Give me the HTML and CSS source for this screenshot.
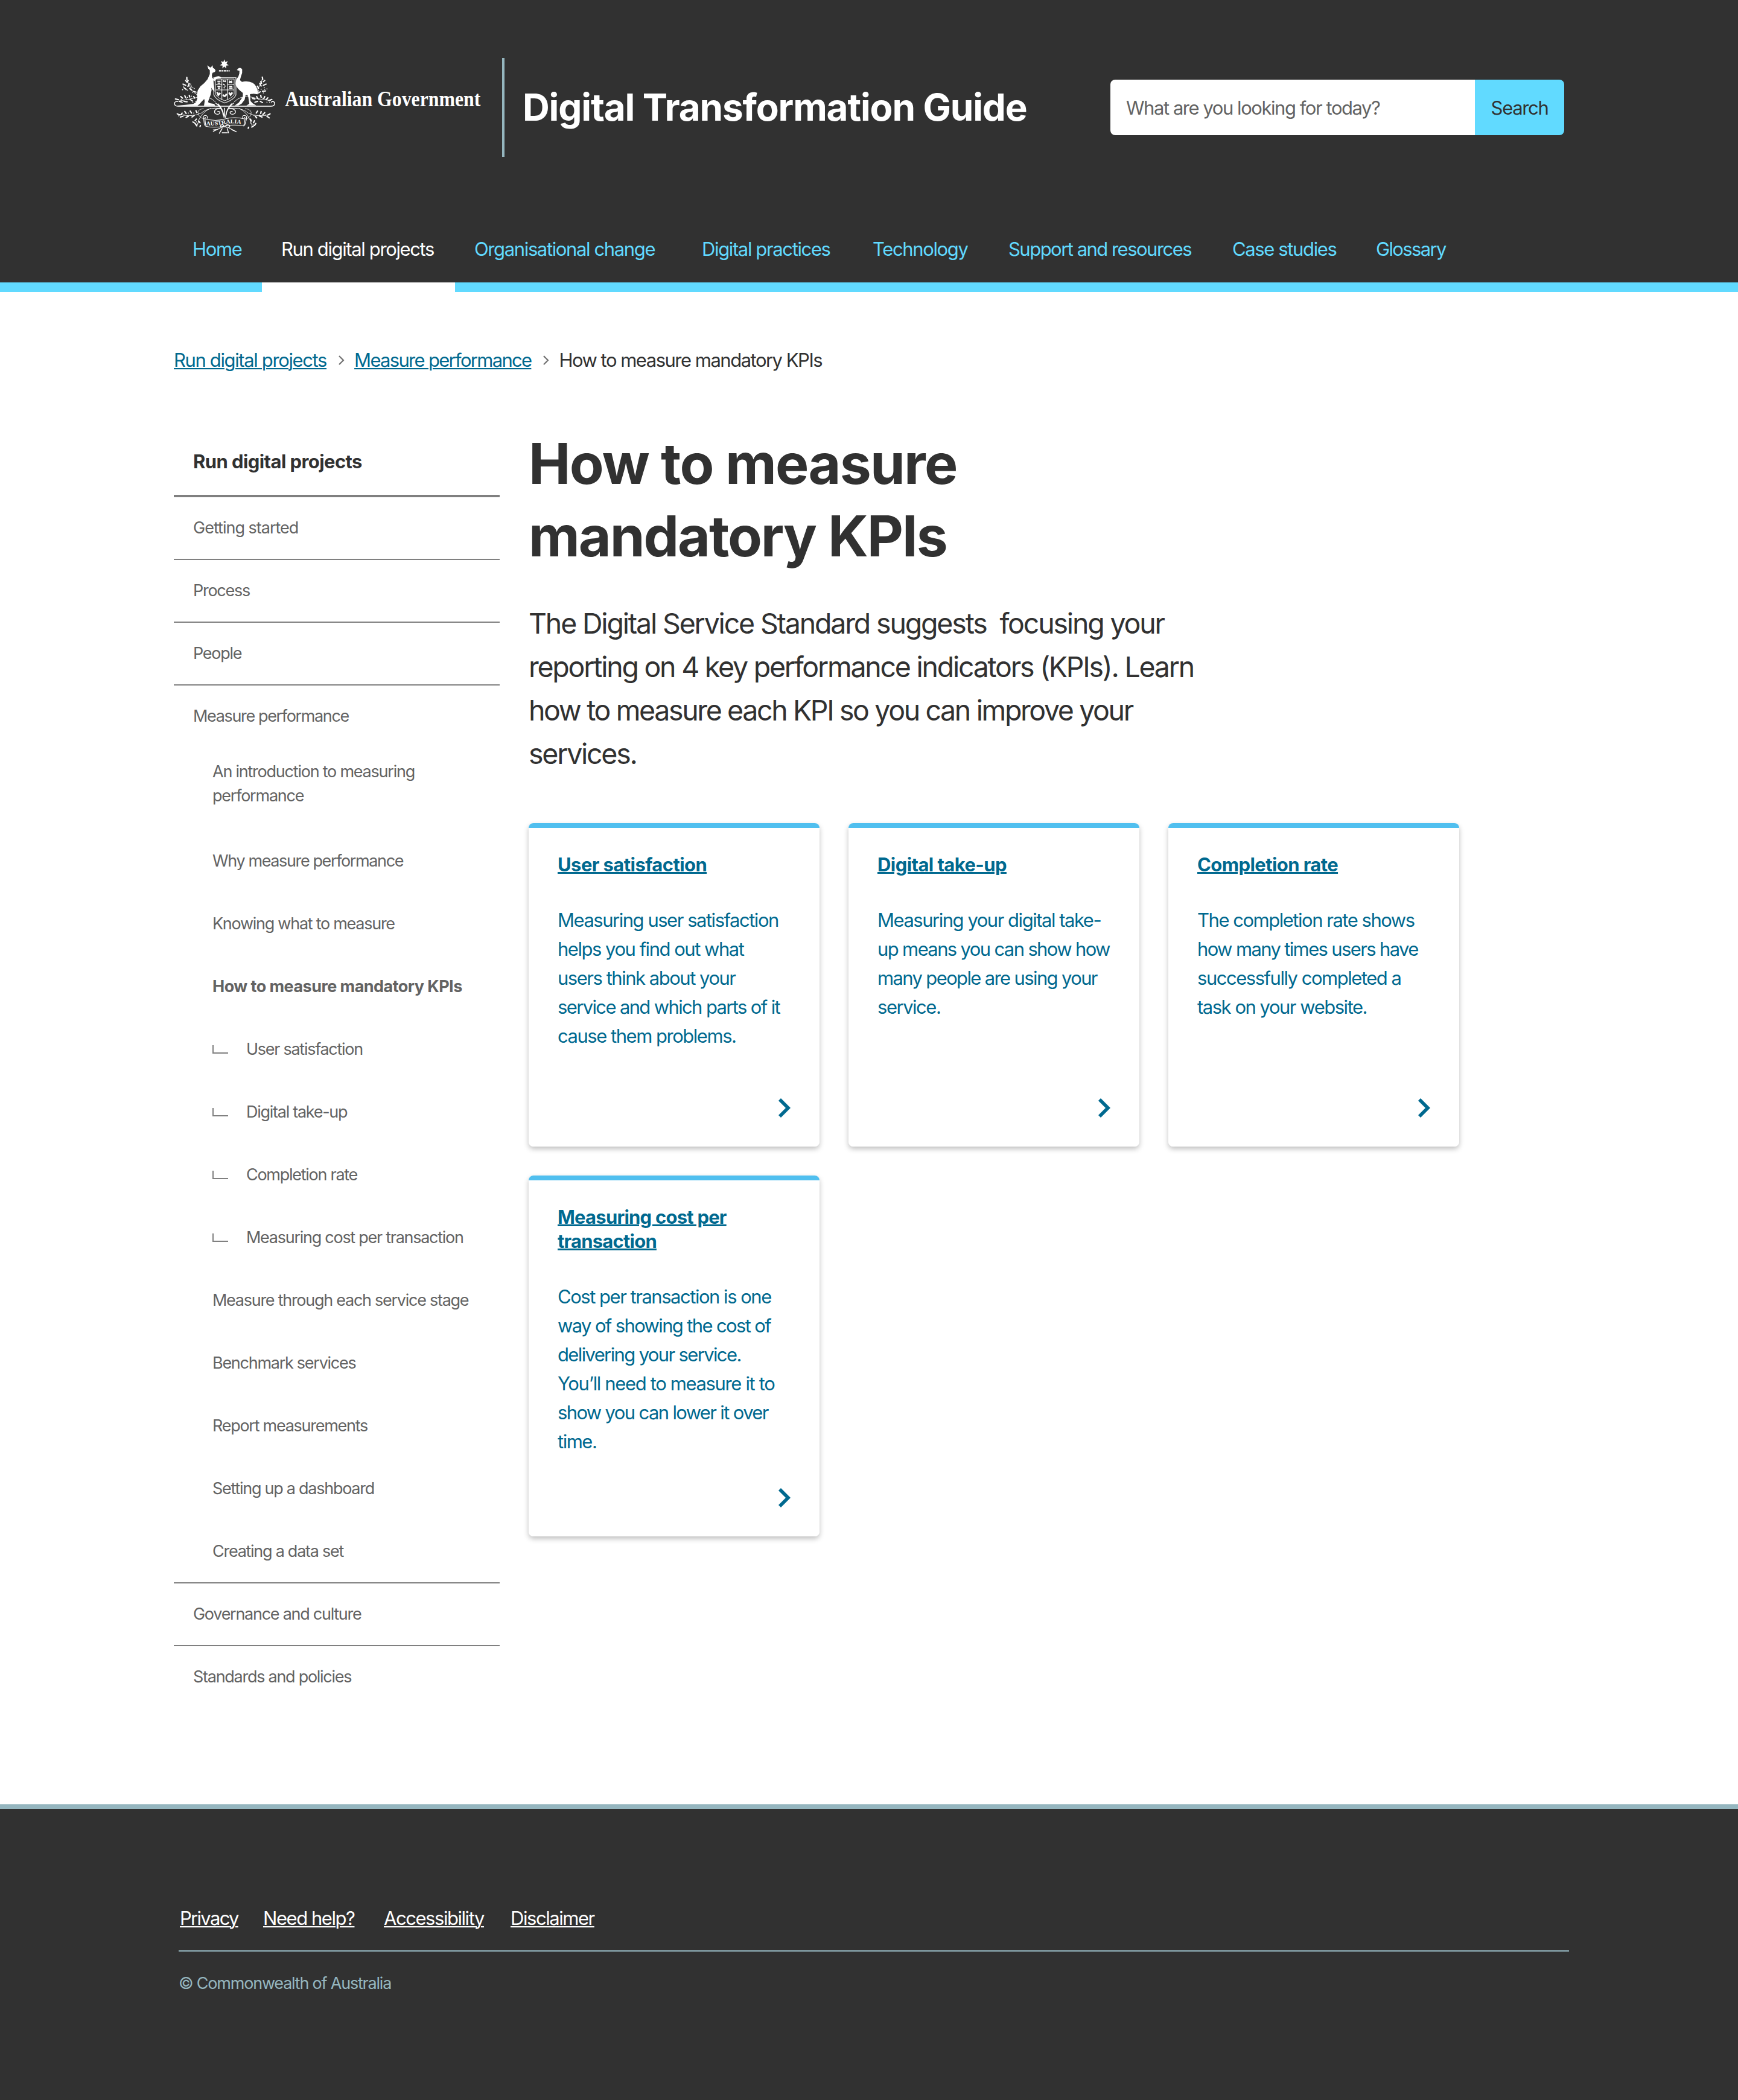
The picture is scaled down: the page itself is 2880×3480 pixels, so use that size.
FILE: index.html
```html
<!DOCTYPE html>
<html lang="en">
<head>
<meta charset="utf-8">
<title>How to measure mandatory KPIs - Digital Transformation Guide</title>
<link rel="stylesheet" href="styles.css">
</head>
<body>
<header class="site-header">
  <div class="wrap brand-row">
    <svg class="logo" viewBox="48.66 48 1449.1 492" preserveAspectRatio="none" role="img" aria-label="Australian Government">
      <!-- Commonwealth star, kangaroo and emu -->
      <g fill="#fff">
        <path d="M275 55L279.3 68.2 290.6 64 284.7 76.3 294.5 84.4 282.8 86.5 283.7 100.6 275 91 266.3 100.6 267.2 86.5 255.5 84.4 265.3 76.3 259.4 64 270.7 68.2z"/>
        <path transform="matrix(1 0 0 .92 0 6.5)" d="M197 85l10 7 5 5 5-4 5-9 2 15 8 6 4 10-4 6-10 5-3 12 2 14 8 10-4 8 1 14 1 12 3 10 1 22-9-12-6-10 2 12-4 26-8 24-4 16 8 6 20 4 4 9h-50l3-24-2-12-10 12-12 16-8 8H62l40-4 34-5 12-10 6-20-2-20 4-24 12-22 17-17 15-21 10-28 0-20-7-9-3-12z"/>
        <path d="M229 148q8-9 22-9l10 5-2 5-12 2-10 3-7 10z"/>
        <path d="M331 108L339 99Q349 95 355 105 357 122 350 138L345 158 354 167Q380 160 402 172 420 184 426 218L424 229 405 226 390 228 392 262 402 274 418 284H374L387 276 382 240 378 232 370 234 366 256 352 276 338 284H322L340 270 358 240V222Q330 200 325 178 325 158 338 140 344 125 343 112L336 110z"/>
      </g>
      <!-- Shield, scrollwork and ribbon -->
      <g fill="none" stroke="#fff">
        <path d="M251 112h48" stroke-width="7" stroke-dasharray="12 2 6 2"/>
        <path d="M228 146h99v86q-8 24-50 40q-41-16-49-40z" stroke-width="4" stroke-opacity=".75"/>
        <path d="M236 153h83v76q-8 18-42 32q-34-14-41-32z" stroke-width="2.5"/>
        <path d="M264 153v103M289 153v103M236 207h83M236 181h28M289 181h30" stroke-width="3"/>
        <path d="M244 164h14M245 173h12M244 190h14M246 198h10M296 162l14 10M310 162l-14 10M297 190h14M296 198h16" stroke-width="6"/>
        <path d="M270 160l4 6M280 160l-2 8M270 178l6 4M280 186l-4 4M272 198l5-3" stroke-width="6"/>
        <path d="M243 218l5 14 9-10M269 230q8 18 16-4M296 220l7 12 8-12" stroke-width="8"/>
        <path d="M68 266q-2-4-8-2-10 4-8 14 4 10 16 10h416q14 0 16-10 2-12-8-14-6 0-6 6" stroke-width="4"/>
        <path d="M276 340V296M270 334q-2-38-34-62M283 334q2-38 34-62M274 345q-4-44-28-70M280 345q4-44 28-70" stroke-width="4"/>
        <path d="M262 302q-22-6-30 8-4 18 14 18 12-2 8-12-6-4-10 0M292 302q22-6 32 8 4 18-14 18-12-2-8-12 6-4 10 0" stroke-width="4"/>
        <path d="M236 268q-28-34-74-26-50 14-90 20M318 268q28-34 74-26 50 14 92 18" stroke-width="2.5"/>
        <path d="M154 232q-32-20-48-84M402 226q36-30 44-78" stroke-width="2.5"/>
        <path d="M258 298q-60-4-86 24-40 22-100 6M296 298q60-4 86 24 40 22 96 8" stroke-width="2.5"/>
        <path d="M214 298q-50 24-60 84M340 298q44 20 60 90" stroke-width="2.5"/>
        <path d="M182 300q-34 4-22 30 4 16 24 20M368 300q34 4 26 30-4 16-22 20" stroke-width="2"/>
        <path d="M188 350q44 16 88 2 44-14 92 0l-6 34q-44-8-84 0-46 12-86 2z" stroke-width="3"/>
        <path d="M198 350q4-16-8-16-12 2-8 12 8 6 8-4M358 350q-4-16 6-16 14 2 10 12-8 6-8-4M182 346l4 38M376 346l-10 38" stroke-width="3"/>
        <path d="M274 388q-4-12-14-6-8 10 4 12M280 388q4-12 16-6 8 10-4 12M264 394q8-8 26 0M258 396l-34 18M296 396l34 20M266 398l-14 26M288 398l6 24M264 420h26M240 404l-16 2M312 408l16 6" stroke-width="4"/>
      </g>
      <!-- Wattle leaves and blossoms -->
      <g stroke="#fff" fill="none" stroke-linecap="round">
        <path d="M107 145v10M102 160l5 8M113 160l-4 8M90 178l12 6M94 196l10 8M118 176l-6 14M120 200l8 8M138 214l10 4" stroke-width="6"/>
        <path d="M445 143l2 12M456 160l-6 6M438 166l4 8M462 178l-12 6M434 174l6 14M424 188l4 12M460 212l-14 2M436 216l-8 6" stroke-width="6"/>
        <path d="M56 252l14 4M74 264l12 4M80 240l8 8M98 236l4 10M118 234l2 8M94 264l14 2M122 254l10 8M138 240l4 8" stroke-width="6"/>
        <path d="M402 250l10 2M420 240l4 10M438 234l2 10M456 240l-4 10M470 246l-6 8M488 254l-14 6M436 264l10 6M412 268l12-4" stroke-width="6"/>
        <path d="M64 326l12 6M86 322l-4 8M98 314l6 10M78 342l12-4M104 344l10-6M122 312l6 10M130 342l10-8M148 310l4 10" stroke-width="6"/>
        <path d="M480 326l-10 6M466 338l10 8M456 320l-6 8M440 314l-2 10M444 342l-12-6M424 312l-6 10M420 346l-6-8" stroke-width="6"/>
        <path d="M150 352l-6 8M144 374l8 12M160 362l6 8M168 384l-2 6M134 366l6 4M392 352l4 10M410 360l-4 10M384 392l-2 6M406 386l-8 6M416 374l-6 10" stroke-width="6"/>
        <path d="M92 188h0M126 186h0M134 196h0M128 192h0M104 206h0M140 200h0M132 218h0M124 178h0M88 206h0M110 208h0M454 196h0M418 210h0M440 204h0M466 202h0M428 212h0M456 204h0M416 190h0M450 222h0M106 252h0M82 254h0M134 268h0M128 238h0M146 264h0M110 244h0M430 254h0M460 256h0M478 268h0M448 248h0M466 268h0M70 336h0M94 332h0M114 322h0M138 322h0M110 336h0M434 332h0M460 332h0M446 328h0M408 334h0M156 376h0M150 366h0M404 378h0M392 372h0" stroke-width="5"/>
      </g>
      <path id="scroll" d="M194 383Q240 384 276 376Q318 368 362 380" fill="none"/>
      <text class="scroll-word"><textPath href="#scroll" textLength="156" lengthAdjust="spacingAndGlyphs">AUSTRALIA</textPath></text>
      <text class="logo-word" x="547" y="289" textLength="876" lengthAdjust="spacingAndGlyphs">Australian Government</text>
    </svg>
    <div class="site-title">Digital Transformation Guide</div>
    <form class="search">
      <input class="search-input" type="text" placeholder="What are you looking for today?">
      <button class="search-button" type="button">Search</button>
    </form>
  </div>
  <nav class="main-nav">
    <ul class="wrap nav-list">
      <li class="nav-item nav-home">Home</li>
      <li class="nav-item nav-active">Run digital projects</li>
      <li class="nav-item">Organisational change</li>
      <li class="nav-item">Digital practices</li>
      <li class="nav-item">Technology</li>
      <li class="nav-item nav-support">Support and resources</li>
      <li class="nav-item">Case studies</li>
      <li class="nav-item nav-glossary">Glossary</li>
    </ul>
  </nav>
</header>

<main class="wrap main">
  <div class="breadcrumb">
    <a class="crumb crumb-first">Run digital projects</a>
    <svg class="crumb-sep" viewBox="0 0 10 16"><path d="M1 1l7 7-7 7"/></svg>
    <a class="crumb crumb-second">Measure performance</a>
    <svg class="crumb-sep" viewBox="0 0 10 16"><path d="M1 1l7 7-7 7"/></svg>
    <span class="crumb-current">How to measure mandatory KPIs</span>
  </div>

  <div class="layout">
    <aside class="side">
      <div class="side-title">Run digital projects</div>
      <div class="side-item side-started">Getting started</div>
      <div class="side-item">Process</div>
      <div class="side-item">People</div>
      <div class="side-group">
        <div class="side-parent">Measure performance</div>
        <div class="sub sub-intro">An introduction to measuring<br>performance</div>
        <div class="sub sub-why">Why measure performance</div>
        <div class="sub">Knowing what to measure</div>
        <div class="sub sub-current">How to measure mandatory KPIs</div>
        <div class="sub leaf">User satisfaction</div>
        <div class="sub leaf">Digital take-up</div>
        <div class="sub leaf">Completion rate</div>
        <div class="sub leaf">Measuring cost per transaction</div>
        <div class="sub">Measure through each service stage</div>
        <div class="sub">Benchmark services</div>
        <div class="sub">Report measurements</div>
        <div class="sub">Setting up a dashboard</div>
        <div class="sub">Creating a data set</div>
      </div>
      <div class="side-item">Governance and culture</div>
      <div class="side-item side-last">Standards and policies</div>
    </aside>

    <section class="content">
      <h1 class="title">How to measure<br><span class="title-tight">mandatory KPIs</span></h1>
      <p class="lead"><span class="lead-wide">The Digital Service Standard suggests&nbsp; focusing your</span><br>reporting on 4 key performance indicators (KPIs). Learn<br><span class="lead-tight">how to measure each KPI so you can improve your</span><br>services.</p>
      <div class="cards">
        <article class="card">
          <h2 class="card-title">User satisfaction</h2>
          <p class="card-text">Measuring user satisfaction<br>helps you find out what<br>users think about your<br><span class="text-tight">service and which parts of it</span><br>cause them problems.</p>
          <svg class="card-arrow" viewBox="0 0 20 32"><path d="M4 0l16 16L4 32l-4-4 12-12L0 4z"/></svg>
        </article>
        <article class="card">
          <h2 class="card-title">Digital take-up</h2>
          <p class="card-text">Measuring your digital take-<br><span class="text-tight">up means you can show how<br>many people are using your</span><br>service.</p>
          <svg class="card-arrow" viewBox="0 0 20 32"><path d="M4 0l16 16L4 32l-4-4 12-12L0 4z"/></svg>
        </article>
        <article class="card">
          <h2 class="card-title">Completion rate</h2>
          <p class="card-text">The completion rate shows<br><span class="text-tight">how many times users have</span><br>successfully completed a<br>task on your website.</p>
          <svg class="card-arrow" viewBox="0 0 20 32"><path d="M4 0l16 16L4 32l-4-4 12-12L0 4z"/></svg>
        </article>
        <article class="card">
          <h2 class="card-title card-title-long">Measuring cost per<br>transaction</h2>
          <p class="card-text">Cost per transaction is one<br><span class="text-tight">way of showing the cost of<br>delivering your service.</span><br><span class="text-wide">You’ll need to measure it to</span><br><span class="text-tight">show you can lower it over</span><br>time.</p>
          <svg class="card-arrow" viewBox="0 0 20 32"><path d="M4 0l16 16L4 32l-4-4 12-12L0 4z"/></svg>
        </article>
      </div>
    </section>
  </div>
</main>

<footer class="site-footer">
  <div class="footer-inner">
    <div class="footer-links">
      <a class="footer-link footer-privacy">Privacy</a>
      <a class="footer-link">Need help?</a>
      <a class="footer-link">Accessibility</a>
      <a class="footer-link">Disclaimer</a>
    </div>
    <div class="copyright">© Commonwealth of Australia</div>
  </div>
</footer>
</body>
</html>
```
FILE: styles.css
```css
* { box-sizing: border-box; }

body {
  margin: 0;
  background: #fff;
  color: #313131;
  font: 400 31px/40px Inter, "Liberation Sans", sans-serif;
  letter-spacing: -1.45px;
  white-space: nowrap;
}

h1, h2, p, ul { margin: 0; padding: 0; }

.wrap { width: 2304px; margin: 0 auto; }

/* Header */
.site-header { background: #313131; }

.brand-row {
  display: flex;
  align-items: flex-start;
  height: 393px;
  padding-top: 96px;
}

.logo { display: block; width: 536px; height: 164px; overflow: visible; }
.logo-word { font: 700 107px "Liberation Serif", serif; fill: #fff; letter-spacing: 0; }
.scroll-word { font: 700 28px "Liberation Serif", serif; fill: #fff; letter-spacing: 0; }

.site-title {
  height: 164px;
  margin-left: 8px;
  padding: 42px 0 0 30px;
  border-left: 4px solid #95b6bf;
  color: #fff;
  font-size: 62px;
  font-weight: 700;
  line-height: 80px;
  letter-spacing: -1.16px;
}

.search {
  display: flex;
  width: 752px;
  height: 92px;
  margin: 36px 0 0 auto;
  border-radius: 8px;
  overflow: hidden;
}

.search-input {
  flex: 1;
  min-width: 0;
  padding: 1px 0 0 26px;
  border: 0;
  background: #fff;
  font: inherit;
  letter-spacing: -1.45px;
}
.search-input::placeholder { color: #636363; opacity: 1; }

.search-button {
  width: 148px;
  padding: 1px 0 0;
  border: 0;
  background: #61daff;
  color: #313131;
  font: inherit;
  letter-spacing: -1.35px;
}

.main-nav { border-bottom: 16px solid #61daff; }

.nav-list {
  display: grid;
  grid-template-columns: 146px 320px 377px 283px 225px 371px 238px auto;
  list-style: none;
}

.nav-item {
  height: 75px;
  padding-left: 32px;
  color: #61daff;
  letter-spacing: -1.37px;
}

.nav-active {
  height: 91px;
  margin-bottom: -16px;
  border-bottom: 16px solid #fff;
  color: #fff;
}

.nav-home { padding-left: 31px; }
.nav-support { letter-spacing: -1.52px; }
.nav-glossary { letter-spacing: -1.65px; }

/* Breadcrumb */
.main { height: 2506px; padding-top: 93px; }

.breadcrumb { display: flex; align-items: center; }

.crumb {
  color: #00698f;
  text-decoration: underline;
  text-decoration-thickness: 2px;
  text-underline-offset: 2px;
}
.crumb-first { letter-spacing: -1.37px; }
.crumb-second { letter-spacing: -1.7px; }
.crumb-current { letter-spacing: -1.5px; }

.crumb-sep {
  width: 10px;
  height: 16px;
  margin: 0 16px 0 20px;
  fill: none;
  stroke: #717171;
  stroke-width: 2.2;
}

/* Side navigation */
.layout {
  display: grid;
  grid-template-columns: 540px 1fr;
  column-gap: 48px;
  align-items: start;
  margin-top: 92px;
}

.side { color: #636363; font-size: 27px; letter-spacing: -1.27px; }

.side-title {
  padding: 32px 32px 31px;
  border-bottom: 4px solid #808080;
  color: #313131;
  font-size: 31px;
  font-weight: 700;
  line-height: 48px;
  letter-spacing: -.58px;
}

.side-item { padding: 31px 32px; border-bottom: 2px solid #808080; }
.side-started { letter-spacing: -1px; }
.side-last { border-bottom: 0; }

.side-group { border-bottom: 2px solid #808080; }
.side-parent { padding: 31px 32px 20px; letter-spacing: -1.35px; }

.sub { padding: 33px 0 31px 64px; }
.sub-intro { padding: 32px 0 35px 64px; letter-spacing: -1.23px; }
.sub-why { letter-spacing: -1.38px; }
.sub-current { font-weight: 700; letter-spacing: -.54px; }

.leaf { display: flex; align-items: center; }
.leaf::before {
  content: "";
  width: 24px;
  height: 12px;
  margin-right: 30px;
  border: solid #808080;
  border-width: 0 0 2px 2px;
}

/* Content */
.content { margin-top: -1px; }

.title {
  font-size: 93px;
  font-weight: 700;
  line-height: 120px;
  letter-spacing: -1.8px;
}
.title-tight { letter-spacing: -2.1px; }

.lead {
  margin-top: 49px;
  font-size: 46.5px;
  line-height: 72px;
  letter-spacing: -2.25px;
}
.lead-wide { letter-spacing: -2.18px; }
.lead-tight { letter-spacing: -2.38px; }

.cards {
  display: grid;
  grid-template-columns: repeat(3, 482px);
  grid-template-rows: 536px 598px;
  gap: 48px;
  margin-top: 79px;
}

.card {
  display: flex;
  flex-direction: column;
  padding: 49px 48px 48px;
  border-radius: 8px;
  background: linear-gradient(#50bfef 8px, #fff 8px);
  box-shadow: 0 4px 8px rgba(0, 0, 0, .25);
  color: #00698f;
}

.card-title {
  font-size: 31px;
  font-weight: 700;
  line-height: 40px;
  letter-spacing: -.58px;
  text-decoration: underline;
  text-decoration-thickness: 3px;
  text-underline-offset: 1px;
}
.card-title-long { letter-spacing: -.78px; }

.card-text { margin-top: 48px; line-height: 48px; letter-spacing: -1.48px; }
.text-tight { letter-spacing: -1.64px; }
.text-wide { letter-spacing: -1.36px; }

.card-arrow {
  width: 20px;
  height: 32px;
  margin: auto 0 0 auto;
  fill: #00698f;
}

/* Footer */
.site-footer {
  height: 490px;
  padding-top: 161px;
  border-top: 8px solid #95b6bf;
  background: #313131;
}

.footer-inner { width: 2304px; margin-left: 296px; }

.footer-links {
  display: grid;
  grid-template-columns: 138px 200px 210px auto;
  justify-content: start;
  height: 75px;
  padding-left: 2px;
  border-bottom: 2px solid #95b6bf;
}

.footer-link {
  color: #fff;
  text-decoration: underline;
  text-decoration-thickness: 2px;
  text-underline-offset: 2px;
}
.footer-privacy { letter-spacing: -1.7px; }

.copyright {
  margin-top: 33px;
  color: #95b6bf;
  font-size: 27px;
  letter-spacing: -1.21px;
}
```
